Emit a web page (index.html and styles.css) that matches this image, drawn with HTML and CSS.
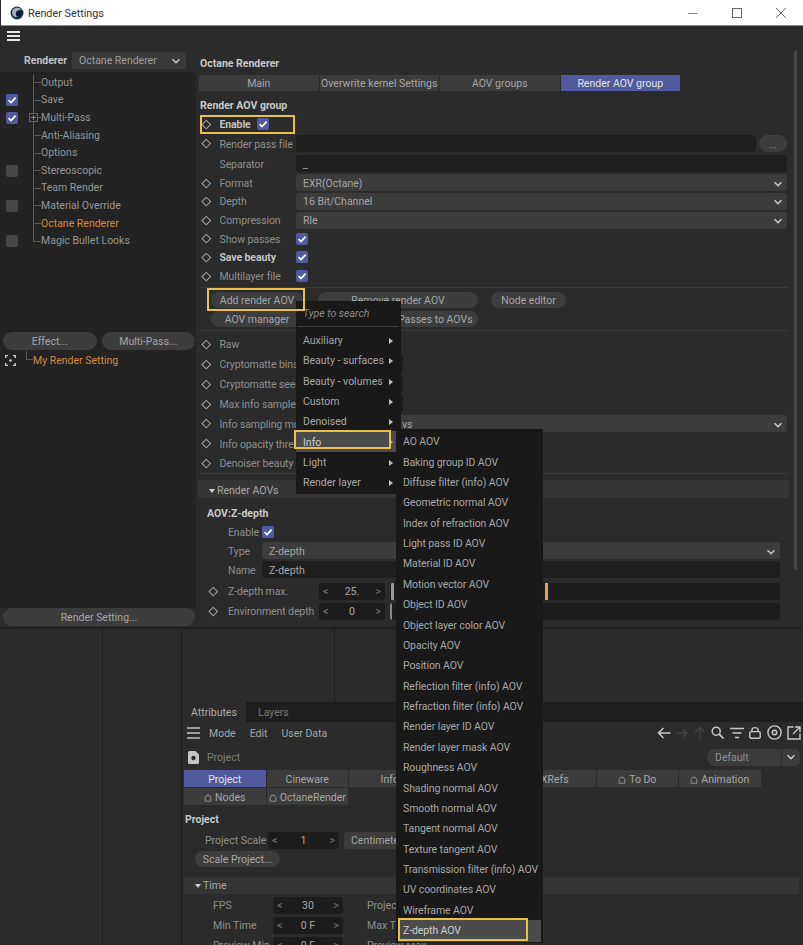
FILE: index.html
```html
<!DOCTYPE html>
<html lang="en">
<head>
    <meta charset="UTF-8">
    <meta name="viewport" content="width=device-width, initial-scale=1.0">
    <title>Render Settings</title>
    <link rel="stylesheet" href="styles.css">
</head>
<body>
    <svg class="defs" width="0" height="0">
        <symbol id="tick" viewBox="0 0 12 12"><path d="M2.6 6.2 5 8.6 9.6 3.6" fill="none" stroke="#fff" stroke-width="1.7"/></symbol>
        <symbol id="chev" viewBox="0 0 10 10"><path d="M1.5 3.2 5 6.6 8.5 3.2" fill="none" stroke="#c4c4c4" stroke-width="1.6"/></symbol>
        <symbol id="tab-lock" viewBox="0 0 10 10"><path d="M1.5 9V4.5L3.5 1.5H6.5L8.5 4.5V9Z" fill="none" stroke="#a8a8a8" stroke-width="1"/></symbol>
    </svg>

    <!-- render settings window -->
    <div class="window">
        <div class="titlebar">
            <svg class="logo" width="14" height="14" viewBox="0 0 14 14">
                <circle cx="7" cy="7" r="6.5" fill="#1d2a52"/>
                <path d="M3 3.6C5.5 1 10 1.2 12 4 9.6 3.2 7 4 6 6.4 5.4 8.2 6 10 7.6 11 5 11.4 2.6 9.8 2.2 7.4 2 6 2.3 4.6 3 3.6Z" fill="#a9b0bb"/>
                <circle cx="8.8" cy="7.6" r="2.5" fill="#0e1730"/>
            </svg>
            <span class="title-text">Render Settings</span>
            <div class="win-controls">
                <svg width="12" height="12" viewBox="0 0 12 12"><path d="M1 6.5H10.5" stroke="#8a8a8a" stroke-width="1"/></svg>
                <svg width="12" height="12" viewBox="0 0 12 12"><rect x="1.5" y="1.5" width="9" height="9" fill="none" stroke="#666" stroke-width="1"/></svg>
                <svg width="12" height="12" viewBox="0 0 12 12"><path d="M1 1 11 11M11 1 1 11" stroke="#666" stroke-width="1"/></svg>
            </div>
        </div>
        <div class="toolbar">
            <div class="burger"><i></i><i></i><i></i></div>
        </div>
        <div class="win-body">
            <aside class="sidebar">
                <div class="renderer-row">
                    <b class="renderer-label">Renderer</b>
                    <div class="select renderer-select">Octane Renderer<svg class="chev"><use href="#chev"/></svg></div>
                </div>
                <div class="tree">
                    <div class="tree-item"><span class="check-cell"></span><span class="branch"></span>Output</div>
                    <div class="tree-item"><span class="check-cell"><span class="check on"><svg><use href="#tick"/></svg></span></span><span class="branch"></span>Save</div>
                    <div class="tree-item"><span class="check-cell"><span class="check on"><svg><use href="#tick"/></svg></span></span><span class="branch"><span class="plus"></span></span>Multi-Pass</div>
                    <div class="tree-item"><span class="check-cell"></span><span class="branch"></span>Anti-Aliasing</div>
                    <div class="tree-item"><span class="check-cell"></span><span class="branch"></span>Options</div>
                    <div class="tree-item"><span class="check-cell"><span class="check"></span></span><span class="branch"></span>Stereoscopic</div>
                    <div class="tree-item"><span class="check-cell"></span><span class="branch"></span>Team Render</div>
                    <div class="tree-item"><span class="check-cell"><span class="check"></span></span><span class="branch"></span>Material Override</div>
                    <div class="tree-item active"><span class="check-cell"></span><span class="branch"></span>Octane Renderer</div>
                    <div class="tree-item"><span class="check-cell"><span class="check"></span></span><span class="branch last"></span>Magic Bullet Looks</div>
                </div>
                <div class="effect-row">
                    <div class="pill">Effect...</div>
                    <div class="pill">Multi-Pass...</div>
                </div>
                <div class="settings-list">
                    <div class="setting-item">
                        <svg class="focus" width="11" height="11" viewBox="0 0 11 11"><path d="M0.7 3V0.7H3M8 0.7H10.3V3M10.3 8V10.3H8M3 10.3H0.7V8" fill="none" stroke="#d0d0d0" stroke-width="1.3"/><circle cx="5.5" cy="5.5" r="1.3" fill="#d0d0d0"/></svg>
                        <span class="branch last"></span>My Render Setting
                    </div>
                </div>
                <div class="pill render-setting">Render Setting...</div>
            </aside>

            <main class="main">
                <div class="main-body">
                    <h2 class="heading title-head">Octane Renderer</h2>
                    <div class="tabs main-tabs">
                        <div class="tab">Main</div>
                        <div class="tab">Overwrite kernel Settings</div>
                        <div class="tab">AOV groups</div>
                        <div class="tab selected">Render AOV group</div>
                    </div>
                    <h2 class="heading group-head">Render AOV group</h2>

                    <div class="row"><span class="dia"></span><span class="label auto"><b>Enable</b></span><span class="check on"><svg><use href="#tick"/></svg></span></div>
                    <div class="row tall"><span class="dia"></span><span class="label">Render pass file</span><div class="field dark grow"></div><div class="pill dots">...</div></div>
                    <div class="row tall"><span class="dia none"></span><span class="label">Separator</span><div class="field dark grow">_</div></div>
                    <div class="row"><span class="dia"></span><span class="label">Format</span><div class="field grow">EXR(Octane)<svg class="chev"><use href="#chev"/></svg></div></div>
                    <div class="row"><span class="dia"></span><span class="label">Depth</span><div class="field grow">16 Bit/Channel<svg class="chev"><use href="#chev"/></svg></div></div>
                    <div class="row"><span class="dia"></span><span class="label">Compression</span><div class="field grow">Rle<svg class="chev"><use href="#chev"/></svg></div></div>
                    <div class="row"><span class="dia"></span><span class="label">Show passes</span><span class="check on"><svg><use href="#tick"/></svg></span></div>
                    <div class="row"><span class="dia"></span><span class="label"><b>Save beauty</b></span><span class="check on"><svg><use href="#tick"/></svg></span></div>
                    <div class="row"><span class="dia"></span><span class="label">Multilayer file</span><span class="check on"><svg><use href="#tick"/></svg></span></div>

                    <div class="divider div-a"></div>
                    <div class="btn-row first">
                        <div class="pill btn-a">Add render AOV</div>
                        <div class="pill btn-b">Remove render AOV</div>
                        <div class="pill btn-c">Node editor</div>
                    </div>
                    <div class="btn-row">
                        <div class="pill btn-a">AOV manager</div>
                        <div class="pill btn-b">Convert Render Passes to AOVs</div>
                    </div>
                    <div class="divider div-b"></div>

                    <div class="long-rows">
                        <div class="row"><span class="dia"></span><span class="label">Raw</span></div>
                        <div class="row"><span class="dia"></span><span class="label">Cryptomatte bins</span><div class="stepper wide"><span></span><span>&gt;</span></div></div>
                        <div class="row"><span class="dia"></span><span class="label">Cryptomatte seed</span><div class="stepper wide"><span></span><span>&gt;</span></div></div>
                        <div class="row"><span class="dia"></span><span class="label">Max info samples</span><div class="stepper wide"><span></span><span>&gt;</span></div></div>
                        <div class="row"><span class="dia"></span><span class="label">Info sampling mode</span><div class="field grow"><span class="far-text">vs</span><svg class="chev"><use href="#chev"/></svg></div></div>
                        <div class="row"><span class="dia"></span><span class="label">Info opacity threshold</span></div>
                        <div class="row"><span class="dia"></span><span class="label">Denoiser beauty</span></div>
                    </div>

                    <div class="divider div-c"></div>
                    <div class="section-bar"><i class="caret"></i>Render AOVs</div>
                    <h2 class="heading aov-head">AOV:Z-depth</h2>
                    <div class="aov-row"><span class="dia none"></span><span class="aov-label short">Enable</span><span class="check on"><svg><use href="#tick"/></svg></span></div>
                    <div class="aov-row"><span class="dia none"></span><span class="aov-label short">Type</span><div class="field grow">Z-depth<svg class="chev"><use href="#chev"/></svg></div></div>
                    <div class="aov-row"><span class="dia none"></span><span class="aov-label short">Name</span><div class="field dark grow">Z-depth</div></div>
                    <div class="aov-row roomy first-roomy"><span class="dia"></span><span class="aov-label">Z-depth max.</span><div class="stepper"><span>&lt;</span>25.<span>&gt;</span></div><div class="slider max"></div></div>
                    <div class="aov-row roomy"><span class="dia"></span><span class="aov-label">Environment depth</span><div class="stepper"><span>&lt;</span>0<span>&gt;</span></div><div class="slider zero"></div></div>
                </div>
                <div class="scrollbar"></div>
            </main>
        </div>
    </div>

    <!-- main app behind the window -->
    <div class="desk">
        <div class="side-col first-col"></div>
        <div class="side-col"></div>
        <div class="desk-right">
            <div class="viewports">
                <div class="vp-left"></div>
                <div class="vp-right"></div>
            </div>
            <div class="attr-tabs">
                <div class="attr-tab current">Attributes</div>
                <div class="attr-tab">Layers</div>
            </div>
            <div class="attr-menu">
                <div class="burger small"><i></i><i></i><i></i></div>
                <span class="menu-word mode">Mode</span>
                <span class="menu-word">Edit</span>
                <span class="menu-word">User Data</span>
                <div class="nav-icons">
                    <svg width="14" height="12" viewBox="0 0 14 12"><path d="M13.5 6H1.5M6.5 1 1.5 6 6.5 11" fill="none" stroke="#c8c8c8" stroke-width="1.5"/></svg>
                    <svg width="12" height="10" viewBox="0 0 12 10"><path d="M0 5H11M7 1 11 5 7 9" fill="none" stroke="#444" stroke-width="1.3"/></svg>
                    <svg width="12" height="13" viewBox="0 0 12 13"><path d="M6 13V1.5M1 6.5 6 1.5 11 6.5" fill="none" stroke="#444" stroke-width="1.3"/></svg>
                    <svg width="13" height="13" viewBox="0 0 13 13"><circle cx="5.2" cy="5.2" r="4" fill="none" stroke="#c8c8c8" stroke-width="1.5"/><path d="M8.2 8.2 12.5 12.5" stroke="#c8c8c8" stroke-width="1.7"/></svg>
                    <svg width="14" height="12" viewBox="0 0 14 12"><path d="M0 1.5H14M2.5 6H11.5M5 10.5H9" stroke="#c8c8c8" stroke-width="1.6"/></svg>
                    <svg width="12" height="13" viewBox="0 0 12 13"><rect x="0.8" y="5.6" width="10.4" height="6.6" rx="1.3" fill="none" stroke="#c8c8c8" stroke-width="1.4"/><path d="M3 5.6V3.6C3 1 9 1 9 3.6V5.6" fill="none" stroke="#c8c8c8" stroke-width="1.4"/></svg>
                    <svg width="15" height="15" viewBox="0 0 15 15"><circle cx="7.5" cy="7.5" r="6.6" fill="none" stroke="#c8c8c8" stroke-width="1.4"/><circle cx="7.5" cy="7.5" r="2.2" fill="none" stroke="#c8c8c8" stroke-width="1.4"/></svg>
                    <svg width="14" height="14" viewBox="0 0 14 14"><path d="M6.5 1H1V13H13V7.5M8 1H13V6M13 1 6 8" fill="none" stroke="#c8c8c8" stroke-width="1.4"/></svg>
                </div>
            </div>
            <div class="project-row">
                <svg width="11" height="13" viewBox="0 0 11 13"><path d="M1.5 0H7.5L11 3.5V11.5A1.5 1.5 0 0 1 9.5 13H1.5A1.5 1.5 0 0 1 0 11.5V1.5A1.5 1.5 0 0 1 1.5 0Z" fill="#c4c4c4"/><circle cx="5.5" cy="7" r="2.2" fill="#2b2b2b"/></svg>
                <span class="project-name">Project</span>
                <div class="preset">
                    <div class="preset-name">Default</div>
                    <div class="preset-arrow"><svg class="chev"><use href="#chev"/></svg></div>
                </div>
            </div>
            <div class="tabs attr-tab-row">
                <div class="tab selected">Project</div>
                <div class="tab">Cineware</div>
                <div class="tab">Info</div>
                <div class="tab">Dynamics</div>
                <div class="tab">XRefs</div>
                <div class="tab"><svg class="lock"><use href="#tab-lock"/></svg>To Do</div>
                <div class="tab"><svg class="lock"><use href="#tab-lock"/></svg>Animation</div>
            </div>
            <div class="tabs attr-tab-row second">
                <div class="tab"><svg class="lock"><use href="#tab-lock"/></svg>Nodes</div>
                <div class="tab"><svg class="lock"><use href="#tab-lock"/></svg>OctaneRender</div>
            </div>
            <h2 class="heading project-head">Project</h2>
            <div class="scale-row">
                <span class="scale-label">Project Scale</span>
                <div class="stepper scale"><span>&lt;</span>1<span>&gt;</span></div>
                <div class="field scale-unit">Centimeters</div>
            </div>
            <div class="pill scale-btn">Scale Project...</div>
            <div class="section-bar time-bar"><i class="caret"></i>Time</div>
            <div class="time-row"><span class="time-label">FPS</span><div class="stepper time"><span>&lt;</span>30<span>&gt;</span></div><span class="time-label right">Project Time</span></div>
            <div class="time-row"><span class="time-label">Min Time</span><div class="stepper time"><span>&lt;</span>0 F<span>&gt;</span></div><span class="time-label right">Max Time</span></div>
            <div class="time-row"><span class="time-label">Preview Min</span><div class="stepper time"><span>&lt;</span>0 F<span>&gt;</span></div><span class="time-label right">Preview Max</span></div>
        </div>
    </div>

    <!-- open popup menus -->
    <div class="menu">
        <div class="menu-search">Type to search</div>
        <div class="menu-item sub">Auxiliary</div>
        <div class="menu-item sub">Beauty - surfaces</div>
        <div class="menu-item sub">Beauty - volumes</div>
        <div class="menu-item sub">Custom</div>
        <div class="menu-item sub">Denoised</div>
        <div class="menu-item sub hover">Info</div>
        <div class="menu-item sub">Light</div>
        <div class="menu-item sub">Render layer</div>
    </div>
    <div class="submenu">
        <div class="sub-item">AO AOV</div>
        <div class="sub-item">Baking group ID AOV</div>
        <div class="sub-item">Diffuse filter (info) AOV</div>
        <div class="sub-item">Geometric normal AOV</div>
        <div class="sub-item">Index of refraction AOV</div>
        <div class="sub-item">Light pass ID AOV</div>
        <div class="sub-item">Material ID AOV</div>
        <div class="sub-item">Motion vector AOV</div>
        <div class="sub-item">Object ID AOV</div>
        <div class="sub-item">Object layer color AOV</div>
        <div class="sub-item">Opacity AOV</div>
        <div class="sub-item">Position AOV</div>
        <div class="sub-item">Reflection filter (info) AOV</div>
        <div class="sub-item">Refraction filter (info) AOV</div>
        <div class="sub-item">Render layer ID AOV</div>
        <div class="sub-item">Render layer mask AOV</div>
        <div class="sub-item">Roughness AOV</div>
        <div class="sub-item">Shading normal AOV</div>
        <div class="sub-item">Smooth normal AOV</div>
        <div class="sub-item">Tangent normal AOV</div>
        <div class="sub-item">Texture tangent AOV</div>
        <div class="sub-item">Transmission filter (info) AOV</div>
        <div class="sub-item">UV coordinates AOV</div>
        <div class="sub-item">Wireframe AOV</div>
        <div class="sub-item hover">Z-depth AOV</div>
    </div>

    <!-- yellow callouts -->
    <div class="callout call-enable"></div>
    <div class="callout call-add"></div>
    <div class="callout call-info"></div>
    <div class="callout call-zdepth"></div>
</body>
</html>
```

FILE: styles.css
```css
* {
    box-sizing: border-box;
}
body {
    position: relative;
    width: 803px;
    height: 945px;
    margin: 0;
    overflow: hidden;
    background: #2b2b2b;
    color: #a6a6a6;
    font-family: Roboto, "Open Sans", Arial, sans-serif;
    font-size: 10.5px;
    line-height: 14px;
}
b {
    color: #c2c2c2;
    font-weight: 700;
}
.defs {
    position: absolute;
}

/* window frame */
.window {
    display: flex;
    flex-direction: column;
    height: 627px;
    background: #2b2b2b;
    box-shadow: 0 1px 3px rgba(0, 0, 0, 0.5);
}
.titlebar {
    display: flex;
    align-items: center;
    height: 26px;
    margin-left: 1px;
    padding-left: 9px;
    background: #fff;
    border-bottom: 1px solid #8c8c8c;
    color: #333;
    font-size: 10.8px;
}
.title-text {
    margin: 2px 0 0 4px;
}
.win-controls {
    display: flex;
    gap: 32px;
    margin-left: auto;
    margin-right: 16px;
}
.toolbar {
    height: 24px;
    padding: 5px 0 0 7px;
}
.burger {
    display: flex;
    flex-direction: column;
    gap: 2px;
    width: 13px;
}
.burger i {
    height: 2px;
    background: #e6e6e6;
}
.burger.small {
    gap: 3px;
}
.burger.small i {
    background: #9c9c9c;
}
.win-body {
    display: flex;
    flex: 1;
    min-height: 0;
}

/* left column */
.sidebar {
    display: flex;
    flex-direction: column;
    width: 196px;
}
.renderer-row {
    display: flex;
    align-items: center;
    height: 22px;
    padding: 0 10px 1px 24px;
}
.renderer-label {
    width: 48px;
}
.select {
    display: flex;
    align-items: center;
    justify-content: space-between;
    background: #3a3a3a;
    border-radius: 3px;
    padding: 1px 5px 0 7px;
}
.renderer-select {
    flex: 1;
    height: 17px;
    color: #9e9e9e;
}
.chev {
    width: 10px;
    height: 10px;
    flex: none;
}
.tree {
    flex: 0 0 260px;
    background: #232323;
    padding-top: 2px;
}
.tree-item {
    display: flex;
    align-items: center;
    height: 17.6px;
    color: #959595;
}
.tree-item.active {
    color: #d58a3e;
}
.check-cell {
    display: flex;
    width: 33px;
    padding-left: 6px;
}
.branch {
    display: block;
    align-self: stretch;
    width: 8px;
    border-left: 1px solid #5a5a5a;
    background: linear-gradient(#5a5a5a, #5a5a5a) no-repeat 0 50% / 100% 1px;
}
.branch.last {
    border-left: 0;
    background: linear-gradient(#5a5a5a, #5a5a5a) no-repeat 0 0 / 1px 50%, linear-gradient(#5a5a5a, #5a5a5a) no-repeat 0 50% / 100% 1px;
}
.plus {
    display: block;
    width: 9px;
    height: 9px;
    margin: 4px 0 0 -5px;
    background: linear-gradient(#888, #888) no-repeat 50% 50% / 5px 1px, linear-gradient(#888, #888) no-repeat 50% 50% / 1px 5px, #232323;
    border: 1px solid #666;
}
.check {
    display: block;
    flex: none;
    width: 12px;
    height: 12px;
    background: #464646;
    border-radius: 2px;
}
.check.on {
    background: #505a9e;
}
.check svg {
    display: block;
    width: 12px;
    height: 12px;
}
.effect-row {
    display: flex;
    gap: 5px;
    height: 18px;
    padding: 0 1px 0 3px;
    background: #232323;
}
.pill {
    display: flex;
    align-items: center;
    justify-content: center;
    padding-top: 2px;
    background: #3d3d3d;
    border-radius: 9px;
    color: #a6a6a6;
}
.effect-row .pill {
    flex: 1;
}
.settings-list {
    flex: 1;
    background: #232323;
}
.setting-item {
    display: flex;
    align-items: center;
    height: 19px;
    margin-top: 1px;
    padding-left: 5px;
    color: #d58a3e;
}
.focus {
    margin-right: 10px;
}
.setting-item .branch {
    width: 7px;
    margin-top: -3px;
    height: 16px;
    align-self: auto;
}
.render-setting {
    height: 18px;
    margin: 0 1px 1px 3px;
}

/* right column */
.main {
    display: flex;
    flex: 1;
    min-width: 0;
}
.main-body {
    width: 593px;
    padding-left: 4px;
}
.scrollbar {
    width: 3px;
    height: 520px;
    margin-left: 5px;
    background: #454545;
    border-radius: 2px;
}
.heading {
    margin: 0 0 -1px;
    padding-top: 1px;
    color: #c8c8c8;
    font-size: 10.5px;
    font-weight: 700;
    line-height: 18px;
}
.title-head {
    margin-top: 4px;
}
.group-head {
    margin: 5px 0 0;
}
.tabs {
    display: flex;
    gap: 1px;
}
.tab {
    display: flex;
    align-items: center;
    justify-content: center;
    padding-top: 2px;
    background: #3c3c3c;
    color: #a6a6a6;
    white-space: nowrap;
}
.tab.selected {
    background: #515a9e;
    color: #e2e2e2;
}
.main-tabs {
    margin-top: 3px;
    margin-left: -1px;
    width: 481px;
    height: 16px;
}
.main-tabs .tab {
    flex: 1;
}
.row {
    display: flex;
    align-items: center;
    height: 18.6px;
    padding-right: 2px;
}
.row.tall {
    height: 20px;
}
.dia {
    display: block;
    flex: none;
    width: 6.5px;
    height: 6.5px;
    margin: 0 3px;
    border: 1px solid #a8a8a8;
    transform: rotate(45deg);
}
.dia.none {
    visibility: hidden;
}
.label {
    flex: none;
    width: 76.5px;
    margin-left: 7px;
    padding-top: 2px;
    white-space: nowrap;
    overflow: hidden;
    color: #8f8f8f;
    letter-spacing: -0.1px;
}
.label.auto {
    width: auto;
    margin-right: 6px;
}
.field {
    display: flex;
    align-items: center;
    justify-content: space-between;
    height: 17px;
    padding: 2px 4px 0 7px;
    background: #3c3c3c;
    border-radius: 3px;
    color: #a6a6a6;
}
.field.dark {
    background: #1e1e1e;
}
.grow {
    flex: 1;
    min-width: 0;
}
.far-text {
    padding-left: 99px;
}
.dots {
    width: 28px;
    height: 17px;
    margin-left: 3px;
    font-size: 9px;
}
.divider {
    height: 1px;
    background: #3a3a3a;
}
.div-a {
    margin-top: 2px;
}
.div-b {
    margin-top: 3px;
}
.div-c {
    margin-top: 0;
}
.btn-row {
    display: flex;
    height: 16px;
    margin-top: 3px;
    padding-left: 11px;
}
.btn-row.first {
    margin-top: 4px;
}
.btn-a {
    width: 92px;
}
.btn-b {
    width: 160px;
    margin-left: 15px;
}
.btn-c {
    width: 75px;
    margin-left: 13px;
}
.long-rows {
    margin-top: 3px;
}
.long-rows .row {
    height: 19.9px;
}
.stepper {
    display: flex;
    align-items: center;
    justify-content: space-between;
    flex: none;
    width: 66px;
    height: 17px;
    padding: 2px 4px 0;
    background: #1c1c1c;
    border-radius: 3px;
    color: #a6a6a6;
}
.stepper span {
    color: #777;
    font-size: 11px;
}
.stepper.wide {
    width: 107px;
}
.section-bar {
    display: flex;
    align-items: center;
    height: 18px;
    margin: 6px 0 0 -2px;
    padding: 3px 0 0 11px;
    background: #353535;
    color: #a6a6a6;
}
.caret {
    width: 0;
    height: 0;
    margin-right: 2px;
    border-left: 3.5px solid transparent;
    border-right: 3.5px solid transparent;
    border-top: 4px solid #cfcfcf;
}
.aov-head {
    margin: 6px 0 -1px 7px;
}
.aov-row {
    display: flex;
    align-items: center;
    height: 19px;
    margin-left: 7px;
    padding-right: 9px;
}
.aov-row.roomy {
    height: 20px;
}
.aov-row.first-roomy {
    margin-top: 2px;
}
.aov-label {
    flex: none;
    width: 91px;
    margin-left: 8.5px;
    padding-top: 2px;
    color: #8f8f8f;
    white-space: nowrap;
    letter-spacing: -0.1px;
}
.aov-label.short {
    width: 34px;
}
.slider {
    flex: 1;
    height: 17px;
    margin-left: 5px;
    border-radius: 3px;
    background-color: #1c1c1c;
}
.slider.max {
    background-image: linear-gradient(#9a9a9a, #9a9a9a), linear-gradient(#e3a53a, #e3a53a);
    background-repeat: no-repeat;
    background-size: 3px 100%, 3px 100%;
    background-position: 1px 0, 155px 0;
}
.slider.zero {
    background-image: linear-gradient(#8a8a8a, #8a8a8a);
    background-repeat: no-repeat;
    background-size: 2px 100%;
    background-position: 0 0;
}

/* app behind */
.desk {
    display: flex;
    height: 318px;
}
.side-col {
    width: 79px;
    border-right: 1px solid #1c1c1c;
}
.first-col {
    width: 103px;
}
.desk-right {
    flex: 1;
    min-width: 0;
}
.viewports {
    display: flex;
    height: 75px;
}
.vp-left {
    width: 153px;
    border-right: 1px solid #1c1c1c;
}
.attr-tabs {
    display: flex;
    height: 20px;
    background: #1e1e1e;
}
.attr-tab {
    display: flex;
    align-items: center;
    padding: 2px 12px 0;
    color: #777;
}
.attr-tab.current {
    width: 64px;
    padding: 2px 0 0 9px;
    background: #2b2b2b;
    color: #ababab;
}
.attr-menu {
    display: flex;
    align-items: center;
    height: 21px;
    padding: 0 2px 0 5px;
}
.menu-word {
    margin: 2px 0 0 14px;
    color: #a6a6a6;
}
.menu-word.mode {
    margin-left: 9px;
}
.nav-icons {
    display: flex;
    align-items: center;
    gap: 5.5px;
    margin-left: auto;
}
.project-row {
    display: flex;
    align-items: center;
    height: 20px;
    margin-top: 4px;
    padding: 0 3px 0 6px;
}
.project-name {
    margin: 2px 0 0 8px;
    color: #7e7e7e;
}
.preset {
    display: flex;
    gap: 1px;
    height: 17px;
    margin-left: auto;
}
.preset-name {
    width: 74px;
    padding: 2px 0 0 8px;
    background: #3c3c3c;
    border-radius: 8px 0 0 8px;
    color: #8f8f8f;
}
.preset-arrow {
    display: flex;
    align-items: center;
    justify-content: center;
    width: 18px;
    background: #3c3c3c;
    border-radius: 0 5px 5px 0;
}
.attr-tab-row {
    height: 17px;
    margin: 3px 0 0 2px;
}
.attr-tab-row.second {
    margin-top: 1px;
}
.attr-tab-row .tab {
    width: 81.5px;
}
.lock {
    width: 8px;
    height: 10px;
    margin-right: 3px;
}
.project-head {
    margin: 5px 0 -1px 3px;
}
.scale-row {
    display: flex;
    align-items: center;
    height: 18px;
    margin-top: 3px;
    padding-left: 23px;
    color: #8f8f8f;
}
.scale-label {
    width: 63px;
    padding-top: 2px;
}
.stepper.scale {
    width: 71px;
}
.scale-unit {
    width: 120px;
    margin-left: 5px;
}
.scale-btn {
    width: 85px;
    height: 16px;
    margin: 2px 0 0 13px;
}
.time-bar {
    height: 17px;
    margin: 10px 4px 0 2px;
    padding: 1px 0 0 11px;
}
.time-row {
    display: flex;
    align-items: center;
    height: 18px;
    margin-top: 2px;
    padding-left: 31px;
    color: #8f8f8f;
}
.time-label {
    width: 60px;
    padding-top: 2px;
    white-space: nowrap;
}
.time-label.right {
    margin-left: 24px;
}
.stepper.time {
    width: 70px;
}

/* popups */
.menu {
    position: absolute;
    left: 296px;
    top: 301px;
    width: 105px;
    height: 193px;
    background: #191919;
    color: #a6a6a6;
}
.menu-search {
    height: 26px;
    margin: 0 3px 3px 2px;
    padding: 6px 0 0 5px;
    border-bottom: 1px solid #3c3c3c;
    color: #8a8a8a;
    font-style: italic;
}
.menu-item {
    display: flex;
    align-items: center;
    width: 100px;
    height: 20.3px;
    padding: 2px 0 0 7px;
    white-space: nowrap;
}
.menu-item.sub {
    position: relative;
}
.menu-item.sub::after {
    content: "";
    position: absolute;
    left: 93px;
    top: 8px;
    border-top: 3px solid transparent;
    border-bottom: 3px solid transparent;
    border-left: 4px solid #c0c0c0;
}
.menu-item.hover {
    background: #4b4b4b;
    color: #d0d0d0;
}
.submenu {
    position: absolute;
    left: 396px;
    top: 429px;
    width: 147px;
    height: 514px;
    padding: 2px 2px 0;
    background: #191919;
    color: #a6a6a6;
}
.sub-item {
    display: flex;
    align-items: center;
    height: 20.38px;
    padding: 2px 0 0 5px;
    white-space: nowrap;
    letter-spacing: -0.1px;
}
.sub-item.hover {
    height: 22px;
    padding-top: 0;
    background: #4b4b4b;
    color: #d0d0d0;
}
.callout {
    position: absolute;
    border: 2px solid #e6c24a;
}
.call-enable {
    left: 200px;
    top: 115px;
    width: 95px;
    height: 19px;
}
.call-add {
    left: 207px;
    top: 288px;
    width: 98px;
    height: 23px;
}
.call-info {
    left: 294px;
    top: 430px;
    width: 97px;
    height: 19px;
}
.call-zdepth {
    left: 398px;
    top: 918px;
    width: 130px;
    height: 23px;
}
```
